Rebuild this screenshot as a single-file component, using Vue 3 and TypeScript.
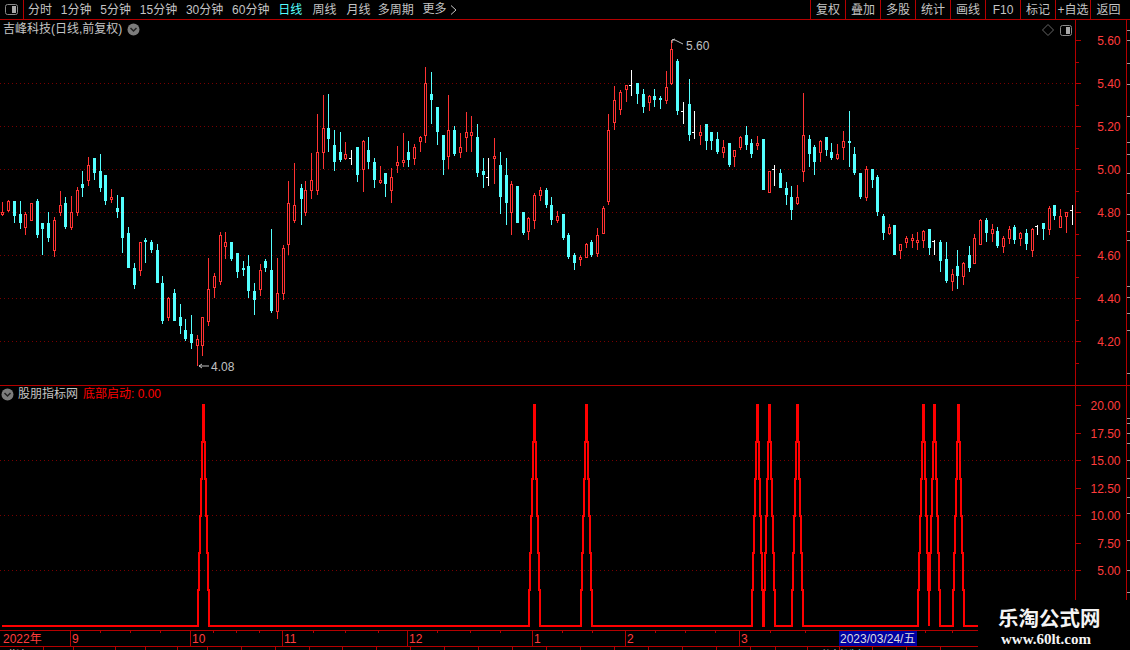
<script setup lang="ts">
type Kind = 'r' | 'c' | 'w'
interface Candle { k: Kind; x: number; hi: number; top: number; bot: number; lo: number }

const groups: { ox: number; oy: number; rows: string }[] = [
  { ox: 0, oy: 180, rows: `r 7 65 97 106 108|r 25 60 63 94 97|c 43 63 63 108 129|c 61 63 102 130 146|r 76 97 102 145 165|r 94 69 69 123 123|c 112 57 63 165 174|c 127 129 129 147 225|c 145 97 129 175 186|r 163 112 120 213 231|r 181 33 75 100 108|c 196 51 69 142 147|r 214 48 96 144 150|r 232 22 30 99 108|c 247 -27 12 24 51|r 265 -69 -45 3 18|c 283 -66 -66 -21 0|c 301 -78 -27 24 36|c 316 -15 -15 63 75|r 334 27 51 60 69|c 352 45 84 96 114|c 367 51 51 174 219|c 385 141 159 264 264|c 403 249 264 315 327|r 421 186 186 273 288|c 436 174 180 186 249|c 454 180 186 210 219|c 472 192 210 309 309|c 487 288 309 423 432|r 505 351 354 414 423|c 523 327 339 423 423|c 541 372 411 438 462|c 556 417 450 477 483|c 574 405 462 489 507|r 592 465 477 498 558|r 607 411 411 498 528|r 625 234 327 426 438|r 643 279 288 324 354|r 661 156 165 306 315|r 676 156 186 201 237|c 694 186 186 237 243|c 712 219 219 276 294|c 730 243 264 270 288|c 745 225 258 333 354|c 763 309 333 360 405|r 781 252 270 330 348|c 796 237 243 264 276|c 814 147 270 393 399|r 832 234 339 396 417|r 850 195 204 342 360|r 865 3 69 195 225|r 883 -51 75 123 129` },
  { ox: 300, oy: 60, rows: `c 3 372 385 417 495|r 16 363 390 459 468|r 34 279 360 393 417|r 52 162 276 393 405|r 70 105 204 279 327|c 85 102 204 237 276|c 103 210 255 306 333|c 121 216 276 300 306|r 136 246 282 297 300|w 154 270 294 297 315|c 172 261 261 345 366|r 190 240 243 330 396|c 205 231 270 306 327|c 223 294 306 360 384|r 241 318 360 369 372|c 256 339 339 372 411|r 274 324 351 393 429|r 292 258 306 318 339|r 310 219 300 309 321|c 325 243 276 300 321|r 343 252 261 297 315|r 361 228 231 246 276|r 376 21 69 228 249|c 394 36 102 120 192|c 412 141 141 216 255|c 430 225 225 300 345|r 445 105 210 291 327|c 463 198 210 282 288|r 481 219 261 279 294|r 499 156 216 234 276|r 514 168 216 228 276|c 532 192 231 339 351|c 550 294 333 345 384|w 565 294 351 354 378|r 583 234 288 297 372|c 601 276 315 411 462|c 619 294 345 429 495|r 634 363 372 459 525|c 652 378 378 489 489|c 670 456 456 519 525|r 685 471 474 516 540|r 703 399 405 483 507|r 721 381 390 408 423|c 739 384 390 435 444|c 754 411 435 480 495|r 772 453 468 483 489|c 790 462 462 534 540|c 805 519 525 591 597|c 823 579 585 609 630|r 841 585 591 600 618|r 859 549 552 594 594|c 874 540 546 585 591|r 892 504 525 582 591` },
  { ox: 590, oy: 30, rows: `r 40 528 534 612 612|r 55 252 300 516 525|r 73 168 210 279 300|r 91 180 186 240 255|r 109 165 165 180 216|w 124 120 165 168 198|c 142 159 159 192 222|c 160 177 192 231 249|r 178 195 198 219 243|c 193 177 198 210 231|c 211 198 204 210 237|r 229 123 171 213 222|r 244 30 57 162 165|c 262 87 93 243 255|w 280 216 243 246 282|c 298 147 222 315 333|w 313 243 306 309 327|r 331 285 306 318 345|c 349 282 282 333 360|c 364 306 306 333 360|c 382 306 327 366 372|r 400 330 351 369 384|c 418 339 339 405 411|r 433 360 360 381 411|r 451 318 321 354 360|c 469 288 315 345 360|c 484 327 339 372 384|r 502 318 339 348 360|c 520 327 327 480 480|r 538 423 423 489 489|w 553 405 417 420 468|c 571 417 429 474 474|c 589 456 474 495 525|c 604 468 501 540 570|r 622 465 501 522 525|r 640 189 315 426 456|c 658 315 327 372 411|c 673 345 351 396 435|r 691 330 333 369 396|c 709 321 321 360 378|c 724 339 366 384 390|r 742 342 372 387 390|r 760 303 333 354 390|c 778 243 333 339 411|c 793 351 372 429 435|c 811 429 429 501 507|r 829 408 417 504 513|c 847 417 417 450 474|c 862 435 441 546 558|c 880 552 558 609 630|r 898 582 591 612 615` },
  { ox: 830, oy: 100, rows: `c 193 375 375 465 465|r 211 432 432 453 477|r 229 408 414 429 444|r 247 402 414 423 444|r 262 396 420 429 450|r 280 390 393 423 444|c 298 387 387 444 465|w 313 420 423 426 465|c 331 420 426 483 516|c 349 426 477 543 549|r 367 507 522 546 573|c 382 450 498 528 567|r 400 486 489 531 555|c 418 438 465 504 516|r 433 402 414 492 492|r 451 357 360 435 435|c 469 354 360 399 426|r 487 372 387 402 426|c 502 381 393 438 444|r 520 408 414 441 459|r 538 378 387 417 432|c 553 375 381 420 432|r 571 396 399 417 438|c 589 387 399 432 450|r 607 384 387 453 471|w 622 375 378 378 405|c 640 369 369 387 420|r 658 318 324 390 405|c 673 315 315 348 360|r 691 327 348 384 384|r 709 336 336 351 399|w 727 315 330 333 375` },
]

const candles: Candle[] = groups.flatMap((g) =>
  g.rows.split('|').map((row) => {
    const p = row.split(' ')
    const y = (i: number) => g.oy + Math.round(Number(p[i]) / 3)
    return { k: p[0] as Kind, x: g.ox + Math.floor(Number(p[1]) / 3), hi: y(2), top: y(3), bot: y(4), lo: y(5) }
  }),
)

const priceGrid = [83, 126, 169, 212, 255, 298, 341]
const priceLabels = ['5.60', '5.40', '5.20', '5.00', '4.80', '4.60', '4.40', '4.20'].map((t, i) => ({ t, y: 40 + i * 43 }))
const priceMinor = Array.from({ length: 8 }, (_, i) => 62 + i * 43)
const lowLabels = ['20.00', '17.50', '15.00', '12.50', '10.00', '7.50', '5.00'].map((t, i) => ({ t, y: 405 + i * 27.5 }))
const lowGrid = [460, 515, 570]
const edgeTicksTop = [30, 40, 63, 84, 116, 142, 154, 173, 193, 214, 231, 240, 286, 297, 313, 330, 373]
const edgeTicksLow = [418, 423, 433, 443, 460, 478, 497, 513, 540, 570, 592]

const peaks = [203, 534, 586, 757, 769, 797, 923, 934, 958]
const levels = [626, 590, 553, 516, 479, 442, 405]
const signalPath = (() => {
  let d = 'M2 626'
  for (const c of peaks) {
    d += ` H${c - 5.5}`
    for (let k = 1; k <= 6; k++) d += ` V${levels[k]}` + (k < 6 ? ` H${c - 5.5 + k}` : '')
    d += ` H${c + 0.5}`
    for (let k = 5; k >= 0; k--) d += ` V${levels[k]}` + (k > 0 ? ` H${c + 0.5 + (5 - k) + 1}` : '')
  }
  return d + ' H978'
})()

const months = [
  { t: '2022年', x: 3, line: 0 },
  { t: '9', x: 72, line: 70 },
  { t: '10', x: 192, line: 190 },
  { t: '11', x: 284, line: 282 },
  { t: '12', x: 409, line: 407 },
  { t: '1', x: 534, line: 532 },
  { t: '2', x: 627, line: 625 },
  { t: '3', x: 741, line: 739 },
]
const smallTicks = [100, 130, 160, 213, 236, 259, 313, 345, 378, 437, 470, 500, 562, 592, 655, 685, 715, 770, 805, 925, 952]
const tabLines = [43, 73, 115, 145, 177, 207, 241, 275, 309, 342, 376, 410, 444, 478, 512, 546, 580, 614, 648, 682, 716, 750, 775, 807, 839, 872, 906, 940]

const periods = ['分时', '1分钟', '5分钟', '15分钟', '30分钟', '60分钟', '日线', '周线', '月线', '多周期']
const tools = ['复权', '叠加', '多股', '统计', '画线', 'F10', '标记', '+自选', '返回']
</script>

<template>
  <div class="screen">
    <header class="toolbar">
      <div class="toggle">
        <svg width="14" height="12" viewBox="0 0 14 12">
          <rect x="0.5" y="0.5" width="12" height="10" rx="2" fill="#000" stroke="#8a8a8a" />
          <rect x="7" y="2" width="4" height="7" fill="#a8a8a8" />
        </svg>
      </div>
      <nav class="periods">
        <span v-for="p in periods" :key="p" :class="{ active: p === '日线' }">{{ p }}</span>
        <span class="more">更多 <svg width="7" height="10" viewBox="0 0 7 10"><path d="M1 .5 6 5 1 9.5" fill="none" stroke="#c4c4c4" /></svg></span>
      </nav>
      <nav class="tools">
        <span v-for="t in tools" :key="t">{{ t }}</span>
      </nav>
    </header>

    <section class="panel upper">
      <div class="plot">
        <svg class="canvas" width="1075" height="365" viewBox="0 20 1075 365">
          <line v-for="y in priceGrid" :key="y" class="grid" x1="0" x2="1075" :y1="y + 0.5" :y2="y + 0.5" />
          <g v-for="(c, i) in candles" :key="i" shape-rendering="crispEdges">
            <template v-if="c.k === 'c'">
              <rect :x="c.x" :y="c.hi" width="1" :height="c.lo - c.hi" fill="#54ffff" />
              <rect :x="c.x - 1" :y="c.top" width="3" :height="Math.max(c.bot - c.top, 2)" fill="#54ffff" />
            </template>
            <template v-else-if="c.k === 'r'">
              <rect :x="c.x" :y="c.hi" width="1" :height="c.lo - c.hi" fill="#ff3232" />
              <rect :x="c.x - 0.5" :y="c.top + 0.5" width="2" :height="Math.max(c.bot - c.top - 1, 1)" fill="#000" stroke="#ff3232" />
            </template>
            <template v-else>
              <rect :x="c.x" :y="c.hi" width="1" :height="c.lo - c.hi" fill="#fff" />
              <rect :x="c.x - 2" :y="c.top" width="2" height="1" fill="#fff" />
            </template>
          </g>
          <path class="marker" d="M199 366H209M199 366l3-2M199 366l3 2" />
          <text class="mark-text" x="211" y="371">4.08</text>
          <path class="marker" d="M672 40H675L683 44M672 40V43M672 40l3-1" />
          <text class="mark-text" x="686" y="50">5.60</text>
        </svg>
        <div class="title">
          <span>吉峰科技(日线,前复权)</span>
          <svg class="chev" width="13" height="13" viewBox="0 0 13 13"><circle cx="6.5" cy="6.5" r="6" fill="#7c7c7c" /><path d="M3.5 5 6.5 8 9.5 5" fill="none" stroke="#222" stroke-width="1.5" /></svg>
        </div>
        <div class="corner">
          <svg width="12" height="12" viewBox="0 0 12 12"><path d="M6 .5 11.5 6 6 11.5.5 6Z" fill="none" stroke="#666" /></svg>
          <svg width="13" height="11" viewBox="0 0 13 11"><rect x="0.5" y="0.5" width="11" height="10" rx="2" fill="#000" stroke="#8a8a8a" /><rect x="6" y="2" width="4" height="7" fill="#a8a8a8" /></svg>
        </div>
      </div>
      <svg class="axis" width="55" height="365" viewBox="1075 20 55 365">
        <g shape-rendering="crispEdges">
          <rect x="1075" y="20" width="1" height="365" class="axis-line" />
          <rect x="1126" y="20" width="1" height="365" class="axis-line" />
          <rect v-for="l in priceLabels" :key="l.t" x="1076" :y="l.y" width="5" height="1" class="axis-line" />
          <rect v-for="y in priceMinor" :key="y" x="1076" :y="y" width="3" height="1" class="axis-line" />
          <rect v-for="y in edgeTicksTop" :key="y" x="1127" :y="y" width="3" height="1" fill="#9a9a9a" />
        </g>
        <text v-for="l in priceLabels" :key="l.t" class="axis-text" x="1120.5" :y="l.y + 5">{{ l.t }}</text>
      </svg>
    </section>

    <section class="panel lower">
      <div class="plot">
        <svg class="canvas" width="1075" height="244" viewBox="0 386 1075 244">
          <line v-for="y in lowGrid" :key="y" class="grid" x1="0" x2="1075" :y1="y + 0.5" :y2="y + 0.5" />
          <path :d="signalPath" fill="none" stroke="#ff0000" stroke-width="2" shape-rendering="crispEdges" />
        </svg>
        <div class="title low-title">
          <svg width="13" height="13" viewBox="0 0 13 13"><circle cx="6.5" cy="6.5" r="6" fill="#7c7c7c" /><path d="M3.5 5 6.5 8 9.5 5" fill="none" stroke="#222" stroke-width="1.5" /></svg>
          <span>股朋指标网</span>
          <span class="formula">底部启动: 0.00</span>
        </div>
      </div>
      <svg class="axis" width="55" height="244" viewBox="1075 386 55 244">
        <g shape-rendering="crispEdges">
          <rect x="1075" y="386" width="1" height="244" class="axis-line" />
          <rect x="1126" y="386" width="1" height="244" class="axis-line" />
          <rect v-for="l in lowLabels" :key="l.t" x="1076" :y="Math.round(l.y)" width="5" height="1" class="axis-line" />
          <rect v-for="y in edgeTicksLow" :key="y" x="1127" :y="y" width="3" height="1" fill="#9a9a9a" />
        </g>
        <text v-for="l in lowLabels" :key="l.t" class="axis-text" x="1120.5" :y="l.y + 5">{{ l.t }}</text>
      </svg>
    </section>

    <svg class="timeline" width="1130" height="20" viewBox="0 630 1130 20">
      <g shape-rendering="crispEdges">
        <rect x="0" y="630" width="1130" height="1" class="axis-line" />
        <rect x="0" y="646" width="1130" height="1" class="axis-line" />
        <template v-for="m in months" :key="m.t">
          <rect v-if="m.line" :x="m.line" y="631" width="1" height="15" class="axis-line" />
        </template>
        <rect v-for="x in smallTicks" :key="x" :x="x" y="631" width="1" height="2" class="axis-line" />
        <rect v-for="x in tabLines" :key="x" :x="x" y="647" width="1" height="3" class="axis-line" />
        <rect x="839" y="631" width="78" height="15" fill="#0000a0" />
      </g>
      <text v-for="m in months" :key="m.t" class="axis-text start" :x="m.x" y="643">{{ m.t }}</text>
      <text class="date" x="840" y="643">2023/03/24/五</text>
      <text class="tab" x="8" y="660">指标</text>
      <text class="tab" x="820" y="660">分析</text>
      <text class="tab on" x="845" y="660">选择</text>
    </svg>

    <aside class="stamp">
      <strong>乐淘公式网</strong>
      <em>www.60lt.com</em>
    </aside>
  </div>
</template>

<style>
html, body { background: #000; }
</style>

<style scoped>
.screen {
  position: relative;
  display: flex;
  flex-direction: column;
  width: 1130px;
  height: 650px;
  overflow: hidden;
  background: #000;
  font-family: "Liberation Sans", "Noto Sans CJK SC", sans-serif;
  font-size: 12px;
  color: #c4c4c4;
}
.toolbar {
  display: flex;
  flex: none;
  height: 19px;
  border-bottom: 1px solid #b40000;
  line-height: 21px;
}
.toggle {
  display: flex;
  align-items: center;
  width: 18px;
  padding-left: 5px;
  border-right: 1px solid #b40000;
}
.periods {
  display: flex;
  gap: 8.8px;
  padding-left: 4px;
  white-space: nowrap;
}
.periods .active { color: #54ffff; }
.periods span:nth-child(8) { margin-left: 1.5px; }
.periods span:nth-child(9) { margin-left: 1px; }
.periods span:nth-child(10) { margin-left: -1.5px; }
.more { display: inline-flex; align-items: center; gap: 3px; }
.tools { display: flex; margin-left: auto; }
.tools span {
  width: 35px;
  box-sizing: border-box;
  text-align: center;
  border-left: 1px solid #b40000;
  white-space: nowrap;
}
.tools span:last-child { width: 40px; padding-right: 4px; }
.panel { display: flex; flex: none; }
.upper { height: 365px; border-bottom: 1px solid #b40000; }
.lower { height: 244px; }
.plot { position: relative; width: 1075px; height: 100%; }
.canvas, .axis, .timeline { display: block; flex: none; }
.grid { stroke: #780000; stroke-width: 1; stroke-dasharray: 1 3; shape-rendering: crispEdges; }
.axis-line { fill: #b40000; }
.axis-text { font-size: 12px; fill: #ff3c3c; text-anchor: end; }
.axis-text.start { text-anchor: start; }
.marker { fill: none; stroke: #c0c0c0; stroke-width: 1; }
.mark-text { font-size: 12px; fill: #c0c0c0; }
.date { font-size: 12px; fill: #dcdcdc; }
.tab { font-size: 12px; fill: #c4c4c4; }
.tab.on { fill: #54ffff; }
.title {
  position: absolute;
  top: 2px;
  left: 3px;
  display: flex;
  align-items: center;
  gap: 5px;
  line-height: 14px;
  white-space: nowrap;
}
.chev { flex: none; }
.low-title { top: 1px; left: 1px; gap: 4px; }
.formula { margin-left: 1px; color: #ff0000; }
.corner {
  position: absolute;
  top: 4px;
  right: 2px;
  display: flex;
  align-items: center;
  gap: 6px;
}
.stamp {
  position: absolute;
  right: 0;
  bottom: 0;
  display: flex;
  flex-direction: column;
  align-items: flex-start;
  width: 132px;
  height: 44px;
  padding: 6px 0 0 20px;
  background: #000;
  color: #f4f4f4;
}
.stamp strong {
  font-size: 20.5px;
  line-height: 26px;
  font-weight: 700;
  white-space: nowrap;
}
.stamp em {
  margin-left: 3px;
  font-family: "Liberation Serif", serif;
  font-size: 15px;
  font-style: normal;
  font-weight: 700;
  line-height: 15px;
  white-space: nowrap;
}
</style>
